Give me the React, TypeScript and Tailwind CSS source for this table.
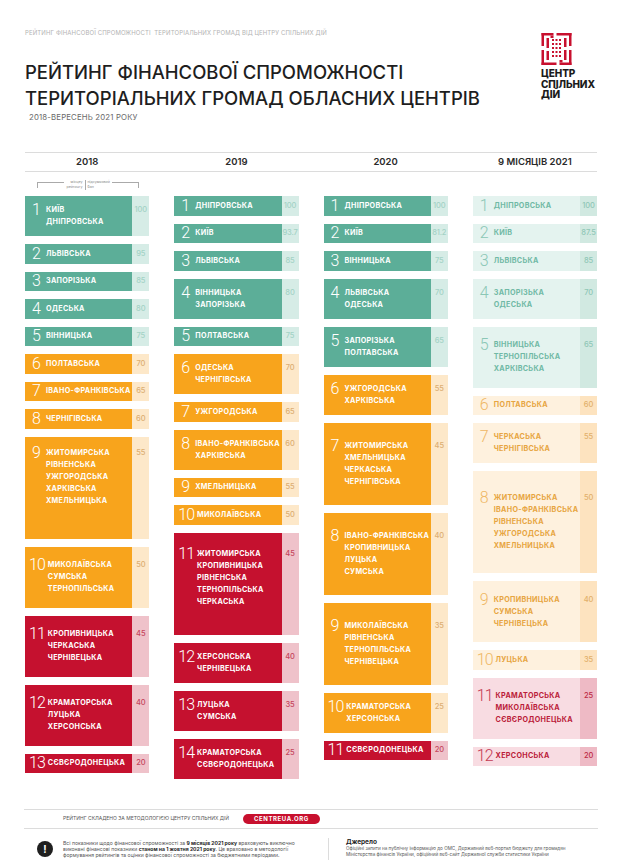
type V = 'g' | 'o' | 'r' | 'lg' | 'lo' | 'lr';
type Row = { n: number; names: string[]; s: string; v: V; pt?: string };

const styles: Record<V, { main: string; num: string; score: string }> = {
  g: { main: 'bg-[#5cae98] text-white', num: 'text-white', score: 'bg-[#d6ece6] text-[#a3d2c5]' },
  o: { main: 'bg-[#f8a41c] text-white', num: 'text-white', score: 'bg-[#fde8c9] text-[#dcae72]' },
  r: { main: 'bg-[#c5112f] text-white', num: 'text-white', score: 'bg-[#efc2ca] text-[#c5455c]' },
  lg: { main: 'bg-[#e4f3ef] text-[#70b9a5]', num: 'text-[#8bc7b6]', score: 'bg-[#d1e9e1] text-[#8fc7b6]' },
  lo: { main: 'bg-[#fef1de] text-[#e7a541]', num: 'text-[#efb865]', score: 'bg-[#fde3bf] text-[#e2b06a]' },
  lr: { main: 'bg-[#f8dce2] text-[#bb1d3a]', num: 'text-[#c33a54]', score: 'bg-[#eebac5] text-[#bd2944]' },
};

const heights = ['', 'h-[19.5px]', 'h-[40px]', 'h-[61px]', 'h-[82px]', 'h-[102px]'];
const blocks = ['', 'h-[12px]', 'h-[24px]', 'h-[36px]', 'h-[48px]', 'h-[60px]'];

const columns: { title: string; rows: Row[]; legend?: boolean }[] = [
  {
    title: '2018',
    legend: true,
    rows: [
      { n: 1, names: ['КИЇВ', 'ДНІПРОВСЬКА'], s: '100', v: 'g' },
      { n: 2, names: ['ЛЬВІВСЬКА'], s: '95', v: 'g' },
      { n: 3, names: ['ЗАПОРІЗЬКА'], s: '85', v: 'g' },
      { n: 4, names: ['ОДЕСЬКА'], s: '80', v: 'g' },
      { n: 5, names: ['ВІННИЦЬКА'], s: '75', v: 'g' },
      { n: 6, names: ['ПОЛТАВСЬКА'], s: '70', v: 'o' },
      { n: 7, names: ['ІВАНО-ФРАНКІВСЬКА'], s: '65', v: 'o' },
      { n: 8, names: ['ЧЕРНІГІВСЬКА'], s: '60', v: 'o' },
      { n: 9, names: ['ЖИТОМИРСЬКА', 'РІВНЕНСЬКА', 'УЖГОРОДСЬКА', 'ХАРКІВСЬКА', 'ХМЕЛЬНИЦЬКА'], s: '55', v: 'o', pt: 'pt-[10px]' },
      { n: 10, names: ['МИКОЛАЇВСЬКА', 'СУМСЬКА', 'ТЕРНОПІЛЬСЬКА'], s: '50', v: 'o' },
      { n: 11, names: ['КРОПИВНИЦЬКА', 'ЧЕРКАСЬКА', 'ЧЕРНІВЕЦЬКА'], s: '45', v: 'r' },
      { n: 12, names: ['КРАМАТОРСЬКА', 'ЛУЦЬКА', 'ХЕРСОНСЬКА'], s: '40', v: 'r' },
      { n: 13, names: ['СЄВЄРОДОНЕЦЬКА'], s: '20', v: 'r' },
    ],
  },
  {
    title: '2019',
    rows: [
      { n: 1, names: ['ДНІПРОВСЬКА'], s: '100', v: 'g' },
      { n: 2, names: ['КИЇВ'], s: '93.7', v: 'g' },
      { n: 3, names: ['ЛЬВІВСЬКА'], s: '85', v: 'g' },
      { n: 4, names: ['ВІННИЦЬКА', 'ЗАПОРІЗЬКА'], s: '80', v: 'g' },
      { n: 5, names: ['ПОЛТАВСЬКА'], s: '75', v: 'g' },
      { n: 6, names: ['ОДЕСЬКА', 'ЧЕРНІГІВСЬКА'], s: '70', v: 'o' },
      { n: 7, names: ['УЖГОРОДСЬКА'], s: '65', v: 'o' },
      { n: 8, names: ['ІВАНО-ФРАНКІВСЬКА', 'ХАРКІВСЬКА'], s: '60', v: 'o' },
      { n: 9, names: ['ХМЕЛЬНИЦЬКА'], s: '55', v: 'o' },
      { n: 10, names: ['МИКОЛАЇВСЬКА'], s: '50', v: 'o' },
      { n: 11, names: ['ЖИТОМИРСЬКА', 'КРОПИВНИЦЬКА', 'РІВНЕНСЬКА', 'ТЕРНОПІЛЬСЬКА', 'ЧЕРКАСЬКА'], s: '45', v: 'r', pt: 'pt-[15px]' },
      { n: 12, names: ['ХЕРСОНСЬКА', 'ЧЕРНІВЕЦЬКА'], s: '40', v: 'r' },
      { n: 13, names: ['ЛУЦЬКА', 'СУМСЬКА'], s: '35', v: 'r' },
      { n: 14, names: ['КРАМАТОРСЬКА', 'СЄВЄРОДОНЕЦЬКА'], s: '25', v: 'r' },
    ],
  },
  {
    title: '2020',
    rows: [
      { n: 1, names: ['ДНІПРОВСЬКА'], s: '100', v: 'g' },
      { n: 2, names: ['КИЇВ'], s: '81.2', v: 'g' },
      { n: 3, names: ['ВІННИЦЬКА'], s: '75', v: 'g' },
      { n: 4, names: ['ЛЬВІВСЬКА', 'ОДЕСЬКА'], s: '70', v: 'g' },
      { n: 5, names: ['ЗАПОРІЗЬКА', 'ПОЛТАВСЬКА'], s: '65', v: 'g' },
      { n: 6, names: ['УЖГОРОДСЬКА', 'ХАРКІВСЬКА'], s: '55', v: 'o' },
      { n: 7, names: ['ЖИТОМИРСЬКА', 'ХМЕЛЬНИЦЬКА', 'ЧЕРКАСЬКА', 'ЧЕРНІГІВСЬКА'], s: '45', v: 'o' },
      { n: 8, names: ['ІВАНО-ФРАНКІВСЬКА', 'КРОПИВНИЦЬКА', 'ЛУЦЬКА', 'СУМСЬКА'], s: '40', v: 'o' },
      { n: 9, names: ['МИКОЛАЇВСЬКА', 'РІВНЕНСЬКА', 'ТЕРНОПІЛЬСЬКА', 'ЧЕРНІВЕЦЬКА'], s: '35', v: 'o' },
      { n: 10, names: ['КРАМАТОРСЬКА', 'ХЕРСОНСЬКА'], s: '25', v: 'o' },
      { n: 11, names: ['СЄВЄРОДОНЕЦЬКА'], s: '20', v: 'r' },
    ],
  },
  {
    title: '9 МІСЯЦІВ 2021',
    rows: [
      { n: 1, names: ['ДНІПРОВСЬКА'], s: '100', v: 'lg' },
      { n: 2, names: ['КИЇВ'], s: '87.5', v: 'lg' },
      { n: 3, names: ['ЛЬВІВСЬКА'], s: '85', v: 'lg' },
      { n: 4, names: ['ЗАПОРІЗЬКА', 'ОДЕСЬКА'], s: '70', v: 'lg' },
      { n: 5, names: ['ВІННИЦЬКА', 'ТЕРНОПІЛЬСЬКА', 'ХАРКІВСЬКА'], s: '65', v: 'lg' },
      { n: 6, names: ['ПОЛТАВСЬКА'], s: '60', v: 'lo' },
      { n: 7, names: ['ЧЕРКАСЬКА', 'ЧЕРНІГІВСЬКА'], s: '55', v: 'lo' },
      { n: 8, names: ['ЖИТОМИРСЬКА', 'ІВАНО-ФРАНКІВСЬКА', 'РІВНЕНСЬКА', 'УЖГОРОДСЬКА', 'ХМЕЛЬНИЦЬКА'], s: '50', v: 'lo' },
      { n: 9, names: ['КРОПИВНИЦЬКА', 'СУМСЬКА', 'ЧЕРНІВЕЦЬКА'], s: '40', v: 'lo' },
      { n: 10, names: ['ЛУЦЬКА'], s: '35', v: 'lo' },
      { n: 11, names: ['КРАМАТОРСЬКА', 'МИКОЛАЇВСЬКА', 'СЄВЄРОДОНЕЦЬКА'], s: '25', v: 'lr' },
      { n: 12, names: ['ХЕРСОНСЬКА'], s: '20', v: 'lr' },
    ],
  },
];

function Item({ r }: { r: Row }) {
  const st = styles[r.v];
  const lines = r.names.length;
  const align = r.pt ? `items-start ${r.pt}` : 'items-center';
  return (
    <div className={`flex ${heights[lines]}`}>
      <div className={`flex min-w-0 flex-1 pl-[4px] ${align} ${st.main}`}>
        <div className="flex">
          <span
            className={`mr-[3px] min-w-[14px] shrink-0 text-center font-[Roboto,sans-serif] text-[16px] font-light leading-[12px] tracking-[-0.06em] ${st.num}`}
          >
            {r.n}
          </span>
          <div className="whitespace-nowrap text-[7.2px] font-bold leading-[12px] tracking-[0.04em]">
            {r.names.map((n) => (
              <div key={n}>{n}</div>
            ))}
          </div>
        </div>
      </div>
      <div className={`flex w-[17px] shrink-0 justify-center ${align} ${st.score}`}>
        <div className={`${blocks[lines]} text-[7.5px] font-medium leading-[12px] tracking-[-0.02em]`}>{r.s}</div>
      </div>
    </div>
  );
}

function Legend() {
  return (
    <div className="flex h-[24px] items-start pl-[12px] pr-[10px] pt-[8px] text-[#8a8a8a]">
      <div className="mt-[2px] h-[6px] flex-1 border-l border-t border-[#aaa]" />
      <div className="px-[2px] text-right text-[3.6px] leading-[4.5px]">
        місцеу
        <br />
        рейтингу
      </div>
      <div className="h-[10px] w-px bg-[#aaa]" />
      <div className="px-[2px] text-[3.6px] leading-[4.5px]">
        підсумковий
        <br />
        бал
      </div>
      <div className="mt-[2px] h-[6px] flex-1 border-r border-t border-[#aaa]" />
    </div>
  );
}

function LogoMark() {
  const dots = [];
  for (let x = 0; x < 3; x++) {
    for (let y = 0; y < 5; y++) {
      dots.push(<rect key={`${x}-${y}`} x={10.5 + x * 3.5} y={6 + y * 4} width="2" height="2" />);
    }
  }
  return (
    <svg width="31" height="32" viewBox="0 0 30 32" fill="#c8102e">
      <rect x="0" y="0" width="12" height="2.5" />
      <rect x="0" y="0" width="2.5" height="13" />
      <rect x="15" y="0" width="15" height="2.5" />
      <rect x="27.5" y="0" width="2.5" height="13" />
      <rect x="0" y="29.5" width="15" height="2.5" />
      <rect x="0" y="17" width="2.5" height="15" />
      <rect x="18" y="29.5" width="12" height="2.5" />
      <rect x="27.5" y="17" width="2.5" height="15" />
      <rect x="5" y="5" width="2.5" height="10" />
      <rect x="5" y="18" width="2.5" height="9" />
      <rect x="22.5" y="5" width="2.5" height="9" />
      <rect x="22.5" y="17" width="2.5" height="10" />
      <rect x="9" y="2.5" width="3" height="2.5" />
      <rect x="18" y="27" width="3" height="2.5" />
      {dots}
    </svg>
  );
}

export default function App() {
  return (
    <div className="h-[867px] w-[622px] overflow-hidden bg-white font-[Inter,'Noto_Sans',sans-serif] text-[#222]">
      {/* header */}
      <div className="flex justify-between px-[25px] pt-[29px]">
        <div>
          <div className="whitespace-nowrap text-[6px] leading-[8px] tracking-[0.02em] text-[#b3b3b3]">
            РЕЙТИНГ ФІНАНСОВОЇ СПРОМОЖНОСТІ&nbsp; ТЕРИТОРІАЛЬНИХ ГРОМАД ВІД ЦЕНТРУ СПІЛЬНИХ ДІЙ
          </div>
          <h1 className="mt-[22px] whitespace-nowrap text-[18.5px] font-medium leading-[26px] text-[#1e1e1e]">
            РЕЙТИНГ ФІНАНСОВОЇ СПРОМОЖНОСТІ
            <br />
            ТЕРИТОРІАЛЬНИХ ГРОМАД ОБЛАСНИХ ЦЕНТРІВ
          </h1>
          <div className="mt-[1px] pl-[4px] text-[7.8px] leading-[10px] tracking-[0.02em] text-[#6a6a6a]">
            2018-ВЕРЕСЕНЬ 2021 РОКУ
          </div>
        </div>
        <div className="mr-[2px] mt-[4px] w-[54px]">
          <LogoMark />
          <div className="mt-[3px] whitespace-nowrap text-[10px] font-extrabold leading-[10.5px] tracking-[-0.01em] text-[#1b1b1b]">
            <div>ЦЕНТР</div>
            <div>СПІЛЬНИХ</div>
            <div>ДІЙ</div>
          </div>
        </div>
      </div>

      {/* column titles */}
      <div className="mx-[25px] mt-[30px] grid h-[20px] grid-cols-4 gap-x-[25px] border-y border-[#dcdcdc]">
        {columns.map((c) => (
          <div key={c.title} className="text-center text-[9.5px] font-semibold leading-[18px] text-[#2a2a2a]">
            {c.title}
          </div>
        ))}
      </div>

      {/* ranking columns */}
      <div className="grid h-[637px] grid-cols-4 gap-x-[25px] px-[25px]">
        {columns.map((c) => (
          <div key={c.title} className="flex flex-col">
            {c.legend ? <Legend /> : <div className="h-[24px]" />}
            <div className="flex flex-col gap-[8px]">
              {c.rows.map((r) => (
                <Item key={r.n} r={r} />
              ))}
            </div>
          </div>
        ))}
      </div>

      {/* footer */}
      <div className="mx-[24px] flex h-[20px] items-center gap-[14px] border-y border-[#dcdcdc] pl-[39px]">
        <span className="whitespace-nowrap text-[5px] uppercase text-[#555]">
          Рейтинг складено за методологією Центру спільних дій
        </span>
        <span className="rounded-full bg-[#c8102e] px-[11px] text-[6px] font-bold leading-[10px] tracking-[0.1em] text-white">
          CENTREUA.ORG
        </span>
      </div>
      <div className="mx-[24px] mt-[9px] flex h-[22px] items-center pl-[13px]">
        <div className="flex h-[16px] w-[16px] shrink-0 items-center justify-center rounded-full bg-[#1f1f1f] text-[10px] font-bold leading-none text-white">
          !
        </div>
        <div className="ml-[10px] w-[240px] whitespace-nowrap text-[5.1px] leading-[6px] text-[#555]">
          <div>
            Всі показники щодо фінансової спроможності за <b className="text-[#1f1f1f]">9 місяців 2021 року</b> враховують виключно
          </div>
          <div>
            виконані фінансові показники <b className="text-[#1f1f1f]">станом на 1 жовтня 2021 року</b>. Це враховано в методології
          </div>
          <div>формування рейтингів та оцінки фінансової спроможності за бюджетними періодами.</div>
        </div>
        <div className="ml-[25px] h-[22px] w-px bg-[#dcdcdc]" />
        <div className="ml-[17px] self-start whitespace-nowrap text-[#555]">
          <div className="text-[6.5px] font-bold leading-[8px] text-[#1f1f1f]">Джерело</div>
          <div className="text-[4.6px] leading-[5.5px]">
            Офіційні запити на публічну інформацію до ОМС, Державний веб-портал бюджету для громадян
          </div>
          <div className="text-[4.6px] leading-[5.5px]">
            Міністерства фінансів України, офіційний веб-сайт Державної служби статистики України
          </div>
        </div>
      </div>
    </div>
  );
}
